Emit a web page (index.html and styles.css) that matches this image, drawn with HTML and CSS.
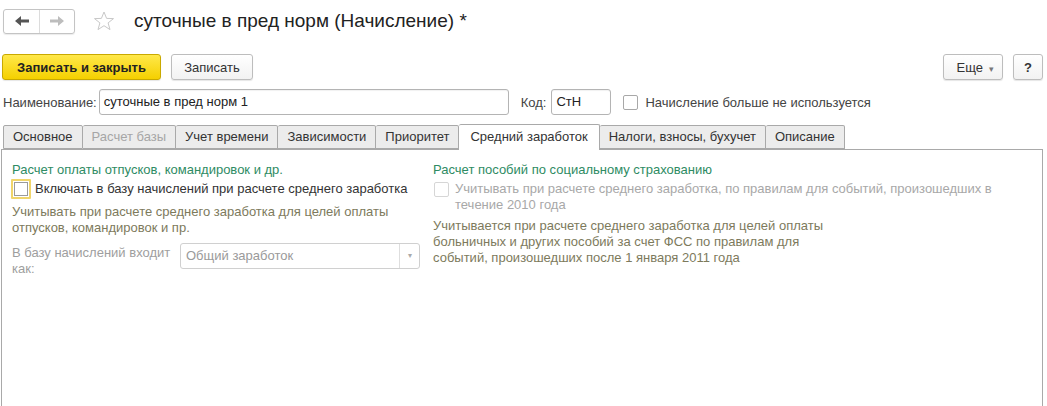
FILE: index.html
```html
<!DOCTYPE html>
<html lang="ru">
<head>
    <meta charset="UTF-8">
    <title>суточные в пред норм (Начисление)</title>
    <link rel="stylesheet" href="styles.css">
</head>
<body>
    <div class="form">
        <header class="title-bar">
            <div class="nav">
                <span class="nav-btn">
                    <svg width="14" height="10" viewBox="0 0 14 10"><path d="M0 5 L6 0 L6 3.5 L14 3.5 L14 6.5 L6 6.5 L6 10 Z" fill="#555"/></svg>
                </span>
                <span class="nav-btn">
                    <svg width="14" height="10" viewBox="0 0 14 10"><path d="M14 5 L8 0 L8 3.5 L0 3.5 L0 6.5 L8 6.5 L8 10 Z" fill="#bdbdbd"/></svg>
                </span>
            </div>
            <svg class="star" width="22" height="20" viewBox="0 0 22 20">
                <polygon points="11,1 13.6,7.4 20.5,7.6 15.1,11.9 17,18.6 11,14.7 5,18.6 6.9,11.9 1.5,7.6 8.4,7.4" fill="none" stroke="#c8c8c8" stroke-width="1"/>
            </svg>
            <h1>суточные в пред норм (Начисление) *</h1>
        </header>

        <div class="toolbar">
            <button class="btn primary">Записать и закрыть</button>
            <button class="btn">Записать</button>
            <div class="spacer"></div>
            <button class="btn more">Еще <span class="caret">&#9662;</span></button>
            <button class="btn help">?</button>
        </div>

        <div class="fields">
            <label class="lbl">Наименование:</label>
            <div class="input name">суточные в пред норм 1</div>
            <label class="lbl code-lbl">Код:</label>
            <div class="input code">СтН</div>
            <span class="check"></span>
            <label class="lbl">Начисление больше не используется</label>
        </div>

        <div class="tabs">
            <span class="tab">Основное</span>
            <span class="tab off">Расчет базы</span>
            <span class="tab">Учет времени</span>
            <span class="tab">Зависимости</span>
            <span class="tab">Приоритет</span>
            <span class="tab active">Средний заработок</span>
            <span class="tab">Налоги, взносы, бухучет</span>
            <span class="tab">Описание</span>
        </div>

        <section class="panel">
            <div class="col left">
                <div class="group-title">Расчет оплаты отпусков, командировок и др.</div>
                <div class="check-row">
                    <span class="check focus"></span>
                    <span class="check-text">Включать в базу начислений при расчете среднего заработка</span>
                </div>
                <p class="hint">Учитывать при расчете среднего заработка для целей оплаты отпусков, командировок и пр.</p>
                <div class="select-row">
                    <span class="select-lbl">В базу начислений входит как:</span>
                    <div class="select">
                        <span>Общий заработок</span>
                        <span class="drop">&#9662;</span>
                    </div>
                </div>
            </div>
            <div class="col right">
                <div class="group-title">Расчет пособий по социальному страхованию</div>
                <div class="check-row">
                    <span class="check disabled"></span>
                    <span class="check-text off">Учитывать при расчете среднего заработка, по правилам для событий, произошедших в течение 2010 года</span>
                </div>
                <p class="hint narrow">Учитывается при расчете среднего заработка для целей оплаты больничных и других пособий за счет ФСС по правилам для событий, произошедших после 1 января 2011 года</p>
            </div>
        </section>
    </div>
</body>
</html>
```

FILE: styles.css
```css
* {
    margin: 0;
    padding: 0;
    box-sizing: border-box;
}

html {
    font-family: "Liberation Sans", Arial, sans-serif;
    font-size: 13px;
    color: #333;
}

body {
    background-color: #fff;
    width: 1047px;
    height: 406px;
    overflow: hidden;
}

.form {
    display: flex;
    flex-direction: column;
    height: 406px;
    padding: 0 4px 0 1px;
}

.title-bar {
    display: flex;
    align-items: center;
    height: 42px;
    padding-left: 2px;
}

.nav {
    display: flex;
    border: 1px solid #c4c4c4;
    border-radius: 3px;
    height: 25px;
    box-shadow: 0 1px 1px rgba(0, 0, 0, 0.08);
}

.nav-btn {
    display: flex;
    align-items: center;
    justify-content: center;
    width: 35px;
}

.nav-btn + .nav-btn {
    border-left: 1px solid #dcdcdc;
}

.star {
    margin-left: 18px;
}

h1 {
    font-size: 19px;
    font-weight: normal;
    color: #222;
    margin-left: 19px;
}

.toolbar {
    display: flex;
    align-items: center;
    height: 26px;
    margin-top: 12px;
    gap: 10px;
    padding-left: 1px;
}

.btn {
    height: 26px;
    border: 1px solid #bdbdbd;
    border-radius: 3px;
    background: linear-gradient(#fff, #f2f2f2);
    font-family: inherit;
    font-size: 13px;
    color: #333;
    padding: 0 14px;
    box-shadow: 0 1px 1px rgba(0, 0, 0, 0.1);
}

.btn.primary {
    background: linear-gradient(#ffe84a, #f5d000);
    border-color: #c9a900;
    font-weight: bold;
    color: #222;
    width: 159px;
    padding: 0;
}

.btn.primary + .btn {
    width: 82px;
    padding: 0;
}

.spacer {
    flex: 1;
}

.btn.more {
    width: 60px;
    padding: 0 0 0 4px;
}

.caret {
    font-size: 9px;
    color: #777;
    margin-left: 2px;
}

.btn.help {
    width: 30px;
    padding: 0;
    font-weight: bold;
}

.fields {
    display: flex;
    align-items: center;
    height: 26px;
    margin-top: 9px;
    padding-left: 2px;
}

.lbl {
    color: #444;
}

.input {
    height: 26px;
    border: 1px solid #b4b4b4;
    border-radius: 3px;
    padding: 0 4px;
    line-height: 24px;
    color: #222;
    box-shadow: inset 0 1px 1px rgba(0, 0, 0, 0.06);
}

.input.name {
    width: 410px;
    margin-left: 2px;
}

.code-lbl {
    margin-left: 12px;
}

.input.code {
    width: 60px;
    margin-left: 5px;
}

.check {
    display: inline-block;
    width: 15px;
    height: 15px;
    border: 1px solid #a8a8a8;
    border-radius: 2px;
    background: #fff;
    margin: 0 7px 0 12px;
    flex-shrink: 0;
}

.tabs {
    display: flex;
    align-items: flex-end;
    height: 25px;
    margin-top: 9px;
    padding-left: 2px;
}

.tab {
    height: 24px;
    line-height: 22px;
    padding: 0 9px;
    background: #ececec;
    border: 1px solid #a9a9a9;
    border-left: none;
    border-radius: 2px 2px 0 0;
    color: #333;
}

.tab:first-child {
    border-left: 1px solid #a9a9a9;
}

.tab.off {
    color: #a6a6a6;
}

.tab.active {
    background: #fff;
    height: 26px;
    line-height: 24px;
    border-bottom: none;
    margin-bottom: -1px;
    padding: 0 11px;
    position: relative;
}

.panel {
    flex: 1;
    display: flex;
    border: 1px solid #a9a9a9;
    border-bottom: none;
    padding: 12px 0 0 9px;
}

.col.left {
    width: 421px;
}

.col.right {
    width: 580px;
}

.group-title {
    color: #2e8b63;
    line-height: 16px;
    margin-left: 1px;
}

.check-row {
    display: flex;
    align-items: flex-start;
    margin-top: 0;
}

.check-row .check {
    margin: 4px 6px 0 2px;
}

.check.focus {
    width: 20px;
    height: 20px;
    margin: 1px 4px 0 0;
    border: 2px solid #f0d56a;
    box-shadow: inset 0 0 0 1px #fff, inset 0 0 0 2px #9a9a9a;
    border-radius: 1px;
}

.check.disabled {
    border-color: #d6d6d6;
}

.check-text {
    line-height: 16px;
    padding-top: 3px;
    color: #333;
}

.check-text.off {
    color: #a8a8a8;
}

.hint {
    color: #7d7a5c;
    line-height: 16px;
    margin-top: 5px;
    margin-left: 1px;
}

.hint.narrow {
    width: 395px;
}

.select-row {
    display: flex;
    margin-top: 7px;
}

.select-lbl {
    width: 168px;
    color: #9e9e9e;
    line-height: 16px;
    padding-top: 2px;
    margin-left: 1px;
}

.select {
    display: flex;
    justify-content: space-between;
    width: 240px;
    height: 26px;
    border: 1px solid #d0d0d0;
    border-radius: 3px;
    line-height: 24px;
    color: #9a9a9a;
    padding-left: 5px;
}

.drop {
    width: 20px;
    border-left: 1px solid #dedede;
    text-align: center;
    font-size: 8px;
    color: #aaa;
}
```
